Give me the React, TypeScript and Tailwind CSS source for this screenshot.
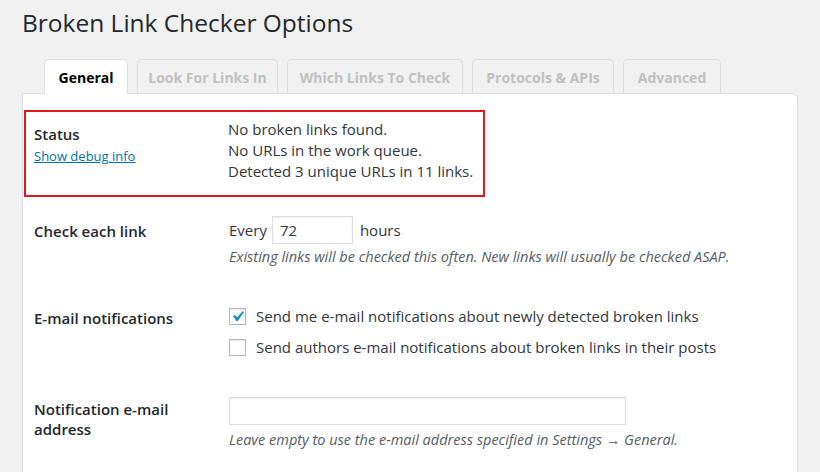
import { useState } from 'react';

const tabs = [
  { label: 'General', width: 'w-[84px]' },
  { label: 'Look For Links In', width: 'w-[141px]' },
  { label: 'Which Links To Check', width: 'w-[176px]' },
  { label: 'Protocols & APIs', width: 'w-[142px]' },
  { label: 'Advanced', width: 'w-[98px]' },
];

function Checkbox({ checked, onChange }: { checked: boolean; onChange: () => void }) {
  return (
    <span
      onClick={onChange}
      className="flex h-[17px] w-[17px] shrink-0 items-center justify-center overflow-visible border border-[#b4b9be] bg-white shadow-[inset_0_1px_2px_rgba(0,0,0,0.1)]"
    >
      {checked && (
        <svg width="21" height="21" viewBox="0 0 20 20" className="-m-[3px] shrink-0">
          <path d="M14.83 4.89l1.34.94-5.81 8.38H9.02L5.78 9.67l1.34-1.25 2.57 2.4z" fill="#1e8cbe" />
        </svg>
      )}
    </span>
  );
}

export default function App() {
  const [interval, setInterval] = useState('72');
  const [email, setEmail] = useState('');
  const [notifyMe, setNotifyMe] = useState(true);
  const [notifyAuthors, setNotifyAuthors] = useState(false);

  return (
    <div
      className="h-[472px] overflow-hidden bg-[#f1f1f1] px-[22px] pt-[7px] text-[15px] text-[#32373c]"
      style={{ fontFamily: '"Open Sans", "Noto Sans", sans-serif' }}
    >
      <h1 className="text-[24.5px] leading-[32px] text-[#23282d]">Broken Link Checker Options</h1>

      <div className="mt-[20px] flex gap-[9px] pl-[22px]">
        {tabs.map((tab, i) => (
          <div
            key={tab.label}
            className={
              i === 0
                ? `relative -mb-px h-[35px] ${tab.width} rounded-t-[5px] border border-b-0 border-[#ddd] bg-white pt-[7px] text-center text-[14px] font-bold text-black`
                : `h-[34px] ${tab.width} rounded-t-[5px] border border-b-0 border-[#ddd] bg-[#f1f1f1] pt-[7px] text-center text-[14px] font-bold text-[#c0c0c0]`
            }
          >
            {tab.label}
          </div>
        ))}
      </div>

      <div className="h-[400px] rounded-tr-[6px] border border-[#ddd] bg-white pl-[1px] pt-[16px]">
        <div className="grid h-[87px] w-[461px] grid-cols-[194px_1fr] items-start border-2 border-[#e3191f] pl-[8px]">
          <div className="pt-[12px] leading-[21px]">
            <div className="font-semibold text-[#23282d]">Status</div>
            <a href="#" className="mt-[1px] block text-[13px] leading-[21px] text-[#0073aa] underline">
              Show debug info
            </a>
          </div>
          <div className="pt-[7px] leading-[21px]">
            <div>No broken links found.</div>
            <div>No URLs in the work queue.</div>
            <div>Detected 3 unique URLs in 11 links.</div>
          </div>
        </div>

        <div className="mt-[19px] grid grid-cols-[195px_1fr] items-start pl-[10px]">
          <div className="pt-[5px] leading-[21px] font-semibold text-[#23282d]">Check each link</div>
          <div>
            <div className="flex items-center">
              <span className="mr-[5px]">Every</span>
              <input
                value={interval}
                onChange={(e) => setInterval(e.target.value)}
                className="h-[28px] w-[81px] border border-[#ddd] px-[7px] text-[15px] text-[#32373c] shadow-[inset_0_1px_2px_rgba(0,0,0,0.07)] outline-none"
              />
              <span className="ml-[7px]">hours</span>
            </div>
            <p className="mt-[3px] text-[14.5px] leading-[20px] italic text-[#555d66]">
              Existing links will be checked this often. New links will usually be checked ASAP.
            </p>
          </div>
        </div>

        <div className="mt-[39px] grid grid-cols-[195px_1fr] items-start pl-[10px]">
          <div className="pt-[2px] leading-[21px] font-semibold text-[#23282d]">E-mail notifications</div>
          <div className="flex flex-col gap-[10px]">
            <label className="flex h-[21px] items-center gap-[10px]">
              <Checkbox checked={notifyMe} onChange={() => setNotifyMe(!notifyMe)} />
              <span>Send me e-mail notifications about newly detected broken links</span>
            </label>
            <label className="flex h-[21px] items-center gap-[10px]">
              <Checkbox checked={notifyAuthors} onChange={() => setNotifyAuthors(!notifyAuthors)} />
              <span>Send authors e-mail notifications about broken links in their posts</span>
            </label>
          </div>
        </div>

        <div className="mt-[39px] grid grid-cols-[195px_1fr] items-start pl-[10px]">
          <div className="pt-[2px] leading-[20px] font-semibold text-[#23282d]">
            Notification e-mail
            <br />
            address
          </div>
          <div>
            <input
              value={email}
              onChange={(e) => setEmail(e.target.value)}
              className="block h-[28px] w-[397px] border border-[#ddd] px-[7px] text-[15px] shadow-[inset_0_1px_2px_rgba(0,0,0,0.07)] outline-none"
            />
            <p className="mt-[5px] text-[14.5px] leading-[20px] italic text-[#555d66]">
              Leave empty to use the e-mail address specified in Settings → General.
            </p>
          </div>
        </div>
      </div>
    </div>
  );
}
